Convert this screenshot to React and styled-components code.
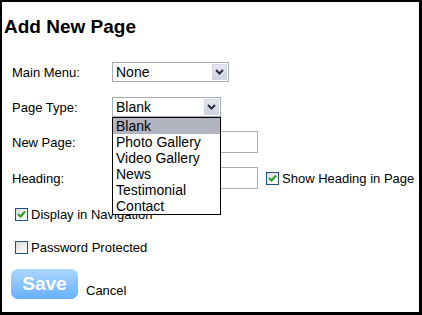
import React, { useState } from 'react';
import styled, { createGlobalStyle } from 'styled-components';

const GlobalStyle = createGlobalStyle`
    html, body {
        margin: 0;
        padding: 0;
        background: #fff;
    }
    body {
        font-family: "Liberation Sans", Arial, sans-serif;
    }
`;

const Frame = styled.div`
    position: relative;
    width: 422px;
    height: 315px;
    box-sizing: border-box;
    border-style: solid;
    border-color: #000;
    border-width: 2px 3px 3px 2px;
    padding: 13px 0 0 2px;
    background: #fff;
    display: flex;
    flex-direction: column;
`;

const Title = styled.h1`
    margin: 0;
    font-size: 19px;
    line-height: 24px;
    font-weight: bold;
    color: #000;
`;

const Form = styled.div`
    margin-top: 23px;
    padding-left: 8px;
    display: flex;
    flex-direction: column;
`;

const FieldRow = styled.div`
    display: flex;
    align-items: center;
    height: ${(p) => p.h || 20}px;
    margin-bottom: ${(p) => p.gap || 15}px;
`;

const Label = styled.div`
    width: 100px;
    font-size: 13px;
    color: #000;
`;

const SelectBox = styled.div`
    position: relative;
    width: ${(p) => p.w}px;
    height: 20px;
    box-sizing: border-box;
    border: 1px solid #a5acb2;
    background: #fff;
    display: flex;
    align-items: center;
    padding-left: 3px;
    font-size: 14px;
    color: #000;
`;

const ArrowBox = styled.div`
    position: absolute;
    right: 1px;
    top: 1px;
    width: 15px;
    height: 16px;
    box-sizing: border-box;
    border: 1px solid #d4d6e0;
    background: linear-gradient(#e6e7ef, #cfd1dd);
    display: flex;
    align-items: center;
    justify-content: center;
`;

const DropList = styled.div`
    position: absolute;
    left: -1px;
    top: 19px;
    width: 109px;
    box-sizing: border-box;
    border: 1px solid #000;
    background: #fff;
    z-index: 5;
`;

const Option = styled.div`
    height: 16px;
    line-height: 16px;
    padding-left: 3px;
    font-size: 14px;
    color: #000;
    background: ${(p) => (p.active ? '#b2b4bf' : '#fff')};
`;

const TextInput = styled.input`
    width: 146px;
    height: 22px;
    box-sizing: border-box;
    border: 1px solid #a5acb2;
    margin: 0;
    padding: 0 3px;
    font-size: 13px;
    outline: none;
`;

const CheckRow = styled.label`
    display: flex;
    align-items: center;
    height: 20px;
    margin-left: ${(p) => p.indent || 0}px;
    margin-bottom: ${(p) => p.gap || 0}px;
    font-size: 13px;
    color: #000;
    cursor: pointer;
`;

const Box = styled.span`
    width: 13px;
    height: 13px;
    box-sizing: border-box;
    border: 1px solid #1c5180;
    background: linear-gradient(135deg, #dcdcd7, #fff);
    margin-left: ${(p) => p.offset || 0}px;
    margin-right: 3px;
    display: flex;
    align-items: center;
    justify-content: center;
    flex-shrink: 0;
`;

const SideLabel = styled.span`
    font-size: 13px;
    color: #000;
`;

const Actions = styled.div`
    display: flex;
    align-items: flex-end;
    margin-left: -1px;
`;

const SaveButton = styled.button`
    width: 67px;
    height: 30px;
    border: none;
    border-radius: 7px;
    background: linear-gradient(#acd6ff, #66b0fa);
    color: #fff;
    font-family: "Liberation Sans", Arial, sans-serif;
    font-size: 19px;
    font-weight: bold;
    padding: 0;
    cursor: pointer;
`;

const CancelLink = styled.span`
    margin-left: 8px;
    margin-bottom: 1px;
    font-size: 13px;
    color: #000;
`;

const Chevron = () => (
    <svg width="9" height="6" viewBox="0 0 9 6">
        <path d="M1 1 L4.5 4.5 L8 1" fill="none" stroke="#2a2a3a" strokeWidth="2" />
    </svg>
);

const Check = () => (
    <svg width="9" height="9" viewBox="0 0 9 9">
        <path d="M1 4 L3.5 6.5 L8 1.5" fill="none" stroke="#21a121" strokeWidth="2" />
    </svg>
);

function Checkbox({ checked, onToggle, label, indent, gap }) {
    return (
        <CheckRow indent={indent} gap={gap} onClick={onToggle}>
            <Box>{checked && <Check />}</Box>
            {label}
        </CheckRow>
    );
}

const pageTypes = ['Blank', 'Photo Gallery', 'Video Gallery', 'News', 'Testimonial', 'Contact'];

function App() {
    const [showHeading, setShowHeading] = useState(true);
    const [inNav, setInNav] = useState(true);
    const [password, setPassword] = useState(false);

    return (
        <>
            <GlobalStyle />
            <Frame>
                <Title>Add New Page</Title>
                <Form>
                    <FieldRow>
                        <Label>Main Menu:</Label>
                        <SelectBox w={117}>
                            None
                            <ArrowBox><Chevron /></ArrowBox>
                        </SelectBox>
                    </FieldRow>
                    <FieldRow gap={14}>
                        <Label>Page Type:</Label>
                        <SelectBox w={109}>
                            Blank
                            <ArrowBox><Chevron /></ArrowBox>
                            <DropList>
                                {pageTypes.map((t, i) => (
                                    <Option key={t} active={i === 0}>{t}</Option>
                                ))}
                            </DropList>
                        </SelectBox>
                    </FieldRow>
                    <FieldRow h={22} gap={14}>
                        <Label>New Page:</Label>
                        <TextInput />
                    </FieldRow>
                    <FieldRow h={22} gap={15}>
                        <Label>Heading:</Label>
                        <TextInput />
                        <Box offset={8} onClick={() => setShowHeading(!showHeading)}>
                            {showHeading && <Check />}
                        </Box>
                        <SideLabel>Show Heading in Page</SideLabel>
                    </FieldRow>
                    <Checkbox indent={3} gap={13} checked={inNav} onToggle={() => setInNav(!inNav)} label="Display in Navigation" />
                    <Checkbox indent={3} gap={12} checked={password} onToggle={() => setPassword(!password)} label="Password Protected" />
                    <Actions>
                        <SaveButton>Save</SaveButton>
                        <CancelLink>Cancel</CancelLink>
                    </Actions>
                </Form>
            </Frame>
        </>
    );
}

export default App;
